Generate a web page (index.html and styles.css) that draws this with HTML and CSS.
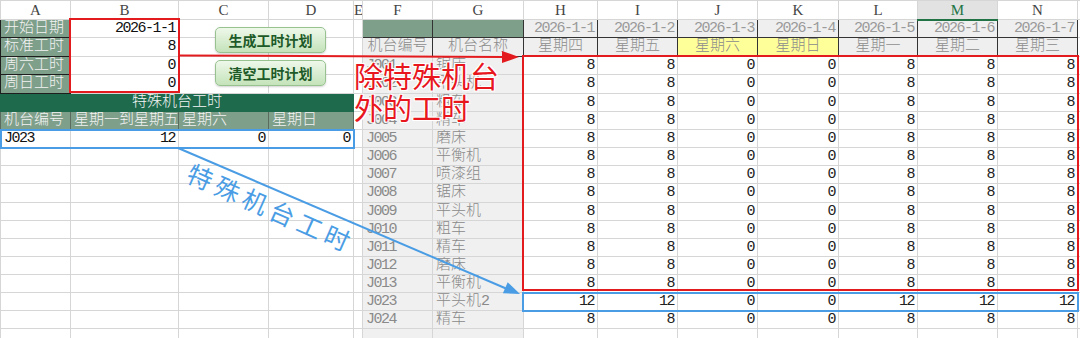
FILE: index.html
```html
<!DOCTYPE html>
<html lang="zh">
<head>
<meta charset="utf-8">
<title>工时计划</title>
<link rel="stylesheet" href="styles.css">
</head>
<body>
<div class="wrap">
  <table class="sheet">
    <colgroup>
      <col class="c-a"><col class="c-b"><col class="c-c"><col class="c-d"><col class="c-e">
      <col class="c-f"><col class="c-g"><col class="c-h"><col class="c-i"><col class="c-j">
      <col class="c-k"><col class="c-l"><col class="c-m"><col class="c-n"><col class="c-z">
    </colgroup>
    <tr class="hdr">
      <td class="ch">A</td><td class="ch">B</td><td class="ch">C</td><td class="ch">D</td><td class="ch e">E</td>
      <td class="ch">F</td><td class="ch">G</td><td class="ch">H</td><td class="ch">I</td><td class="ch">J</td>
      <td class="ch">K</td><td class="ch">L</td><td class="ch sel">M</td><td class="ch">N</td><td class="ch z"></td>
    </tr>
    <tr>
      <td class="lbl">开始日期</td><td class="val n">2026-1-1</td><td></td><td></td><td class="e"></td>
      <td class="gf"></td><td class="gf"></td>
      <td class="dt n">2026-1-1</td><td class="dt n">2026-1-2</td><td class="dt n">2026-1-3</td><td class="dt n">2026-1-4</td><td class="dt n">2026-1-5</td><td class="dt n">2026-1-6</td><td class="dt n">2026-1-7</td><td class="z"></td>
    </tr>
    <tr class="tall">
      <td class="lbl">标准工时</td><td class="val n">8</td><td></td><td></td><td class="e"></td>
      <td class="fh">机台编号</td><td class="fh">机台名称</td>
      <td class="wk">星期四</td><td class="wk">星期五</td><td class="wk we">星期六</td><td class="wk we">星期日</td><td class="wk">星期一</td><td class="wk">星期二</td><td class="wk">星期三</td><td class="z"></td>
    </tr>
    <tr>
      <td class="lbl">周六工时</td><td class="val n">0</td><td></td><td></td><td class="e"></td>
      <td class="id n">J001</td><td class="nm">锯床</td>
      <td class="v n">8</td><td class="v n">8</td><td class="v n">0</td><td class="v n">0</td><td class="v n">8</td><td class="v n">8</td><td class="v n">8</td><td class="z"></td>
    </tr>
    <tr class="tall">
      <td class="lbl">周日工时</td><td class="val n">0</td><td></td><td></td><td class="e"></td>
      <td class="id n">J002</td><td class="nm">平头机</td>
      <td class="v n">8</td><td class="v n">8</td><td class="v n">0</td><td class="v n">0</td><td class="v n">8</td><td class="v n">8</td><td class="v n">8</td><td class="z"></td>
    </tr>
    <tr>
      <td class="ttl" colspan="4">特殊机台工时</td><td class="e"></td>
      <td class="id n">J003</td><td class="nm">粗车</td>
      <td class="v n">8</td><td class="v n">8</td><td class="v n">0</td><td class="v n">0</td><td class="v n">8</td><td class="v n">8</td><td class="v n">8</td><td class="z"></td>
    </tr>
    <tr>
      <td class="th">机台编号</td><td class="th">星期一到星期五</td><td class="th">星期六</td><td class="th">星期日</td><td class="e"></td>
      <td class="id n">J004</td><td class="nm">精车</td>
      <td class="v n">8</td><td class="v n">8</td><td class="v n">0</td><td class="v n">0</td><td class="v n">8</td><td class="v n">8</td><td class="v n">8</td><td class="z"></td>
    </tr>
    <tr>
      <td class="txt n">J023</td><td class="val n">12</td><td class="val n">0</td><td class="val n">0</td><td class="e"></td>
      <td class="id n">J005</td><td class="nm">磨床</td>
      <td class="v n">8</td><td class="v n">8</td><td class="v n">0</td><td class="v n">0</td><td class="v n">8</td><td class="v n">8</td><td class="v n">8</td><td class="z"></td>
    </tr>
    <tr>
      <td></td><td></td><td></td><td></td><td class="e"></td>
      <td class="id n">J006</td><td class="nm">平衡机</td>
      <td class="v n">8</td><td class="v n">8</td><td class="v n">0</td><td class="v n">0</td><td class="v n">8</td><td class="v n">8</td><td class="v n">8</td><td class="z"></td>
    </tr>
    <tr>
      <td></td><td></td><td></td><td></td><td class="e"></td>
      <td class="id n">J007</td><td class="nm">喷漆组</td>
      <td class="v n">8</td><td class="v n">8</td><td class="v n">0</td><td class="v n">0</td><td class="v n">8</td><td class="v n">8</td><td class="v n">8</td><td class="z"></td>
    </tr>
    <tr class="tall">
      <td></td><td></td><td></td><td></td><td class="e"></td>
      <td class="id n">J008</td><td class="nm">锯床</td>
      <td class="v n">8</td><td class="v n">8</td><td class="v n">0</td><td class="v n">0</td><td class="v n">8</td><td class="v n">8</td><td class="v n">8</td><td class="z"></td>
    </tr>
    <tr>
      <td></td><td></td><td></td><td></td><td class="e"></td>
      <td class="id n">J009</td><td class="nm">平头机</td>
      <td class="v n">8</td><td class="v n">8</td><td class="v n">0</td><td class="v n">0</td><td class="v n">8</td><td class="v n">8</td><td class="v n">8</td><td class="z"></td>
    </tr>
    <tr>
      <td></td><td></td><td></td><td></td><td class="e"></td>
      <td class="id n">J010</td><td class="nm">粗车</td>
      <td class="v n">8</td><td class="v n">8</td><td class="v n">0</td><td class="v n">0</td><td class="v n">8</td><td class="v n">8</td><td class="v n">8</td><td class="z"></td>
    </tr>
    <tr>
      <td></td><td></td><td></td><td></td><td class="e"></td>
      <td class="id n">J011</td><td class="nm">精车</td>
      <td class="v n">8</td><td class="v n">8</td><td class="v n">0</td><td class="v n">0</td><td class="v n">8</td><td class="v n">8</td><td class="v n">8</td><td class="z"></td>
    </tr>
    <tr>
      <td></td><td></td><td></td><td></td><td class="e"></td>
      <td class="id n">J012</td><td class="nm">磨床</td>
      <td class="v n">8</td><td class="v n">8</td><td class="v n">0</td><td class="v n">0</td><td class="v n">8</td><td class="v n">8</td><td class="v n">8</td><td class="z"></td>
    </tr>
    <tr>
      <td></td><td></td><td></td><td></td><td class="e"></td>
      <td class="id n">J013</td><td class="nm">平衡机</td>
      <td class="v n">8</td><td class="v n">8</td><td class="v n">0</td><td class="v n">0</td><td class="v n">8</td><td class="v n">8</td><td class="v n">8</td><td class="z"></td>
    </tr>
    <tr>
      <td></td><td></td><td></td><td></td><td class="e"></td>
      <td class="id n">J023</td><td class="nm">平头机2</td>
      <td class="v n">12</td><td class="v n">12</td><td class="v n">0</td><td class="v n">0</td><td class="v n">12</td><td class="v n">12</td><td class="v n">12</td><td class="z"></td>
    </tr>
    <tr>
      <td></td><td></td><td></td><td></td><td class="e"></td>
      <td class="id n">J024</td><td class="nm">精车</td>
      <td class="v n">8</td><td class="v n">8</td><td class="v n">0</td><td class="v n">0</td><td class="v n">8</td><td class="v n">8</td><td class="v n">8</td><td class="z"></td>
    </tr>
    <tr>
      <td></td><td></td><td></td><td></td><td class="e"></td>
      <td class="id"></td><td class="nm"></td>
      <td></td><td></td><td></td><td></td><td></td><td></td><td></td><td class="z"></td>
    </tr>
  </table>

  <button class="btn btn-gen" type="button">生成工时计划</button>
  <button class="btn btn-clr" type="button">清空工时计划</button>

  <div class="box box-input"></div>
  <div class="box box-data"></div>
  <div class="box blue box-special"></div>
  <div class="box blue box-row"></div>

  <svg class="arrows" width="1080" height="338" viewBox="0 0 1080 338">
    <line x1="179" y1="55.5" x2="504" y2="57" stroke="#e31b1e" stroke-width="2"/>
    <polygon points="519,57 502,51 502,63" fill="#e31b1e"/>
    <line x1="178" y1="148" x2="506" y2="288.5" stroke="#4a9de4" stroke-width="2"/>
    <polygon points="520,294 507.7,282.2 502.9,293.2" fill="#4a9de4"/>
  </svg>

  <div class="note-red">除特殊机台<br>外的工时</div>
  <div class="note-blue">特殊机台工时</div>
</div>
</body>
</html>
```

FILE: styles.css
```css
html, body {
  margin: 0;
  padding: 0;
  background: #ffffff;
}

.wrap {
  position: relative;
  width: 1080px;
  height: 338px;
  overflow: hidden;
  font-family: "Liberation Mono", "Noto Sans CJK SC", monospace;
  font-weight: 300;
  color: #222;
}

.sheet {
  border-collapse: collapse;
  table-layout: fixed;
  width: 1080px;
}

.c-a { width: 70px; }
.c-b { width: 108px; }
.c-c { width: 90px; }
.c-d { width: 85px; }
.c-e { width: 9px; }
.c-f { width: 70px; }
.c-g { width: 91px; }
.c-h { width: 74px; }
.c-i { width: 80px; }
.c-j { width: 80px; }
.c-k { width: 81px; }
.c-l { width: 79px; }
.c-m { width: 80px; }
.c-n { width: 80px; }
.c-z { width: 3px; }

.sheet tr { height: 18px; }
.sheet tr.tall { height: 19px; }
.sheet tr.hdr { height: 19px; }

.sheet td {
  padding: 0 3px;
  border: 1px solid #d6d6d6;
  white-space: nowrap;
  overflow: hidden;
  font-size: 15px;
  line-height: 16px;
  vertical-align: middle;
}

.sheet td.e,
.sheet td.z {
  padding: 0;
}

.n { letter-spacing: -1.5px; }

/* column letters */
.ch {
  text-align: center;
  color: #444;
  background: #ffffff;
  font-family: "Liberation Serif", serif;
  font-size: 15px;
  border-color: #dedede;
  border-bottom-color: #c8c8c8;
}
.ch.sel {
  background: #e2e2e2;
  color: #217346;
  border-bottom: 2px solid #217346;
}

/* left parameter block */
.lbl {
  background: #7e9f8a;
  color: #f3f3f3;
  border-color: #1e1e1e !important;
}
.val {
  text-align: right;
  color: #111;
}
.txt { color: #111; }

.ttl {
  background: #1d6a4c;
  color: #f5f5f5;
  text-align: center;
  border-color: #1d6a4c !important;
}
.th {
  background: #7e9f8a;
  color: #f3f3f3;
  border-color: #5b6b60 !important;
}

/* right plan block */
.gf {
  background: #7e9f8a;
  border-color: #333 !important;
}
.dt {
  background: #efefef;
  color: #9a9a9a;
  text-align: right;
  border-color: #333 !important;
}
.wk {
  background: #efefef;
  color: #8c8c8c;
  text-align: center;
  border-color: #333 !important;
}
.wk.we { background: #ffff99; }
.fh {
  background: #efefef;
  color: #8c8c8c;
  text-align: center;
  border-color: #333 !important;
}
.id, .nm {
  background: #f0f0f0;
  color: #8a8a8a;
  border-color: #d2d2d2;
}
.v {
  text-align: right;
  color: #222;
}

/* buttons (floating shapes) */
.btn {
  position: absolute;
  left: 215px;
  width: 111px;
  height: 26px;
  padding: 0;
  border: 1px solid #98c391;
  border-radius: 5px;
  background: linear-gradient(#eef8ea, #c4e3ba);
  box-shadow: 0 1px 2px rgba(0, 0, 0, 0.18);
  color: #1d5a28;
  font-family: "Noto Sans CJK SC", sans-serif;
  font-weight: 700;
  font-size: 14px;
  line-height: 24px;
  text-align: center;
}
.btn-gen { top: 27px; }
.btn-clr { top: 60px; }

/* highlight boxes */
.box {
  position: absolute;
  box-sizing: border-box;
  border: 2px solid #e31b1e;
}
.box-input { left: 69px; top: 18px; width: 111px; height: 75px; }
.box-data { left: 522px; top: 55px; width: 557px; height: 236px; }
.box.blue { border-color: #4a9de4; }
.box-special { left: 0; top: 129px; width: 355px; height: 20px; }
.box-row { left: 522px; top: 292px; width: 557px; height: 20px; }

.arrows {
  position: absolute;
  left: 0;
  top: 0;
}

.note-red {
  position: absolute;
  left: 354px;
  top: 59px;
  font-family: "Noto Sans CJK SC", sans-serif;
  font-weight: 400;
  font-size: 29px;
  line-height: 32px;
  color: #e8161d;
  text-shadow: 0 0 2px #fff, 1px 1px 0 #fff, -1px -1px 0 #fff, 1px -1px 0 #fff, -1px 1px 0 #fff;
}

.note-blue {
  position: absolute;
  left: 195px;
  top: 158px;
  transform: rotate(24deg);
  transform-origin: 0 0;
  font-family: "Noto Sans CJK SC", sans-serif;
  font-weight: 400;
  font-size: 25px;
  line-height: 28px;
  letter-spacing: 5px;
  color: #4a9de4;
  white-space: nowrap;
}
```
